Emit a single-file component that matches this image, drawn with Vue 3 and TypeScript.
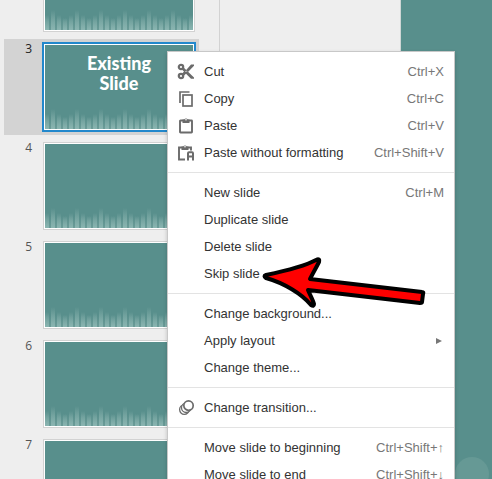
<script setup lang="ts">
interface Slide {
  id: number
  title?: string
  selected?: boolean
}

interface MenuItem {
  label: string
  shortcut?: string
  icon?: 'cut' | 'copy' | 'paste' | 'pasteText' | 'transition'
  submenu?: boolean
}

const slides: Slide[] = [
  { id: 2 },
  { id: 3, title: 'Existing Slide', selected: true },
  { id: 4 },
  { id: 5 },
  { id: 6 },
  { id: 7 },
]

const firstNumbered = 3

const barPattern: number[] = [15, 20, 15, 12]
const bars: number[] = Array.from({ length: 25 }, (_, i) => barPattern[i % 4])

const groups: MenuItem[][] = [
  [
    { label: 'Cut', shortcut: 'Ctrl+X', icon: 'cut' },
    { label: 'Copy', shortcut: 'Ctrl+C', icon: 'copy' },
    { label: 'Paste', shortcut: 'Ctrl+V', icon: 'paste' },
    { label: 'Paste without formatting', shortcut: 'Ctrl+Shift+V', icon: 'pasteText' },
  ],
  [
    { label: 'New slide', shortcut: 'Ctrl+M' },
    { label: 'Duplicate slide' },
    { label: 'Delete slide' },
    { label: 'Skip slide' },
  ],
  [
    { label: 'Change background...' },
    { label: 'Apply layout', submenu: true },
    { label: 'Change theme...' },
  ],
  [{ label: 'Change transition...', icon: 'transition' }],
  [
    { label: 'Move slide to beginning', shortcut: 'Ctrl+Shift+↑' },
    { label: 'Move slide to end', shortcut: 'Ctrl+Shift+↓' },
  ],
]
</script>

<template>
  <div class="editor">
    <aside class="filmstrip">
      <ol class="slides">
        <li v-for="s in slides" :key="s.id" class="slide" :class="{ selected: s.selected }">
          <span class="number"><template v-if="s.id >= firstNumbered">{{ s.id }}</template></span>
          <div class="thumb">
            <div class="art">
              <p v-if="s.title" class="title">{{ s.title }}</p>
              <div class="bars">
                <span v-for="(h, i) in bars" :key="i" class="bar" :style="{ height: h + 'px' }"></span>
              </div>
            </div>
          </div>
        </li>
      </ol>
    </aside>
    <main class="workspace">
      <div class="canvas">
        <span class="dot"></span>
      </div>
    </main>

    <div class="menu" role="menu">
      <div v-for="(group, g) in groups" :key="g" class="group" role="group">
        <button v-for="item in group" :key="item.label" class="item" type="button" role="menuitem">
          <span class="icon">
            <svg v-if="item.icon === 'cut'" viewBox="0 0 18 18" aria-hidden="true">
              <g fill="none" stroke="#6b6b6b" stroke-width="2.2">
                <circle cx="4" cy="4" r="2.2" />
                <circle cx="4" cy="13" r="2.2" />
              </g>
              <path d="M5 6.800 6.900 4.800 17 14.500v1.300h-3L9 10.800l-2.500 2.200L4.800 11 7 8.500z" fill="#6b6b6b" />
              <path d="M9.200 7 14 1.500h3v1.300L11 9z" fill="#6b6b6b" />
              <circle cx="9" cy="8.500" r="0.600" fill="#fff" />
            </svg>
            <svg v-else-if="item.icon === 'copy'" viewBox="0 0 18 18" aria-hidden="true">
              <g fill="none" stroke="#6b6b6b" stroke-width="1.700">
                <path d="M3 13V2h9.500" />
                <rect x="6" y="5" width="9" height="11" />
              </g>
            </svg>
            <svg v-else-if="item.icon === 'paste'" viewBox="0 0 18 18" aria-hidden="true">
              <rect x="3" y="3.500" width="12" height="12" rx="0.500" fill="none" stroke="#6b6b6b" stroke-width="1.900" />
              <path d="M5.500 2.600h1.800a1.800 1.800 0 0 1 3.400 0h1.800v3.400h-7z" fill="#6b6b6b" />
              <circle cx="9" cy="2.800" r="0.800" fill="#fff" />
            </svg>
            <svg v-else-if="item.icon === 'pasteText'" viewBox="0 0 18 18" aria-hidden="true">
              <path d="M8 15.500H2V3.500h12V6.500" fill="none" stroke="#6b6b6b" stroke-width="1.900" />
              <path d="M4.500 2.600h1.800a1.800 1.800 0 0 1 3.400 0h1.800v3.400h-7z" fill="#6b6b6b" />
              <circle cx="8" cy="2.800" r="0.800" fill="#fff" />
              <path d="M11 16.500V9.200q0-1 1-1h3q1 0 1 1v7.300M11 12.500H16" fill="none" stroke="#6b6b6b" stroke-width="2" />
            </svg>
            <svg v-else-if="item.icon === 'transition'" viewBox="0 0 18 18" aria-hidden="true">
              <g fill="#fff" stroke="#6b6b6b" stroke-width="1.300">
                <circle cx="7.300" cy="10.600" r="4.700" />
                <circle cx="9.200" cy="8.800" r="4.700" />
                <circle cx="11.500" cy="6.600" r="4.700" stroke-width="1.700" />
              </g>
            </svg>
          </span>
          <span class="label">{{ item.label }}</span>
          <span v-if="item.shortcut" class="shortcut">{{ item.shortcut }}</span>
          <svg v-if="item.submenu" class="caret" viewBox="0 0 6 6" aria-hidden="true">
            <path d="M0 0 6 3 0 6z" fill="#777" />
          </svg>
        </button>
      </div>
    </div>

    <svg class="arrow" viewBox="0 0 164 54" aria-hidden="true">
      <path
        d="M4 20C23 16 41 12 54 5Q58 3 57 7C54 13 51 18 48 24L160 37Q162 37 161 39L160 47Q160 48 158 48L46 35C48 40 51 45 52 49Q52 52 49 50C40 39 22 28 4 23Q1 21 4 20Z"
        fill="#fe0000"
        stroke="#000"
        stroke-width="4"
        stroke-linejoin="round"
      />
    </svg>
  </div>
</template>

<style>
body {
  margin: 0;
}
</style>

<style scoped>
.editor {
  position: relative;
  display: flex;
  height: 100vh;
  overflow: hidden;
  background: #eeeeee;
  font-family: "Liberation Sans", Arial, sans-serif;
  font-size: 13px;
}

.filmstrip {
  box-sizing: border-box;
  flex: 0 0 220px;
  display: flex;
  flex-direction: column;
  justify-content: flex-start;
  overflow: hidden;
  border-right: 1px solid #d2d2d2;
}

.slides {
  display: flex;
  flex-direction: column;
  gap: 3px;
  margin: -60px 20px 0 4px;
  padding: 0;
  list-style: none;
}

.slide {
  display: flex;
  padding: 3px 3px 3px 0;
}

.slide.selected {
  background: #d3d3d3;
}

.number {
  flex: 0 0 28px;
  margin-right: 10px;
  color: #555;
  font: 12px/14px "Open Sans", sans-serif;
  text-align: right;
}

.selected .number {
  color: #222;
}

.thumb {
  flex: 1;
  padding: 2px;
}

.art {
  display: flex;
  flex-direction: column;
  justify-content: flex-end;
  height: 84px;
  border: 1px solid #fff;
  outline: 1px solid #d2d2d2;
  background: #588f8c;
}

.selected .art {
  outline: 2px solid #2288cc;
}

.title {
  width: 80px;
  margin: 0 auto auto;
  padding-top: 8px;
  color: #fff;
  font: 900 18px/20px Lato, sans-serif;
  text-align: center;
}

.bars {
  display: flex;
  align-items: flex-end;
  gap: 2px;
  overflow: hidden;
  background: linear-gradient(to top, #6b9c98, #588f8c 12px);
}

.bar {
  flex: 0 0 4px;
  background: linear-gradient(to top, #8ab5b1, rgba(122, 168, 164, 0.7) 60%, rgba(112, 160, 156, 0));
}

.workspace {
  flex: 1;
  display: flex;
}

.canvas {
  flex: 1;
  display: flex;
  align-items: flex-end;
  justify-content: flex-end;
  margin-left: 180px;
  border-left: 1px solid #cfd6d5;
  background: #588f8c;
}

.dot {
  width: 34px;
  height: 34px;
  margin: 0 3px -12px 0;
  border-radius: 50%;
  background: #669995;
}

.menu {
  position: absolute;
  top: 51px;
  left: 167px;
  box-sizing: border-box;
  width: 288px;
  border: 1px solid #c8c8c8;
  background: #fff;
  box-shadow: 0 2px 4px rgba(0, 0, 0, 0.2);
}

.group {
  display: flex;
  flex-direction: column;
  padding: 6px 0;
}

.group + .group {
  border-top: 1px solid #e3e3e3;
}

.item {
  display: flex;
  align-items: center;
  height: 27px;
  padding: 0 10px 0 9px;
  border: 0;
  background: none;
  color: #333;
  font: inherit;
  text-align: left;
}

.icon {
  flex: 0 0 18px;
  height: 18px;
  margin-right: 9px;
}

.icon svg {
  display: block;
  width: 18px;
  height: 18px;
}

.label {
  flex: 1;
  white-space: nowrap;
}

.shortcut {
  color: #777;
}

.caret {
  width: 6px;
  height: 6px;
  margin-right: 2px;
}

.arrow {
  position: absolute;
  top: 255px;
  left: 262px;
  width: 164px;
  height: 54px;
}
</style>
